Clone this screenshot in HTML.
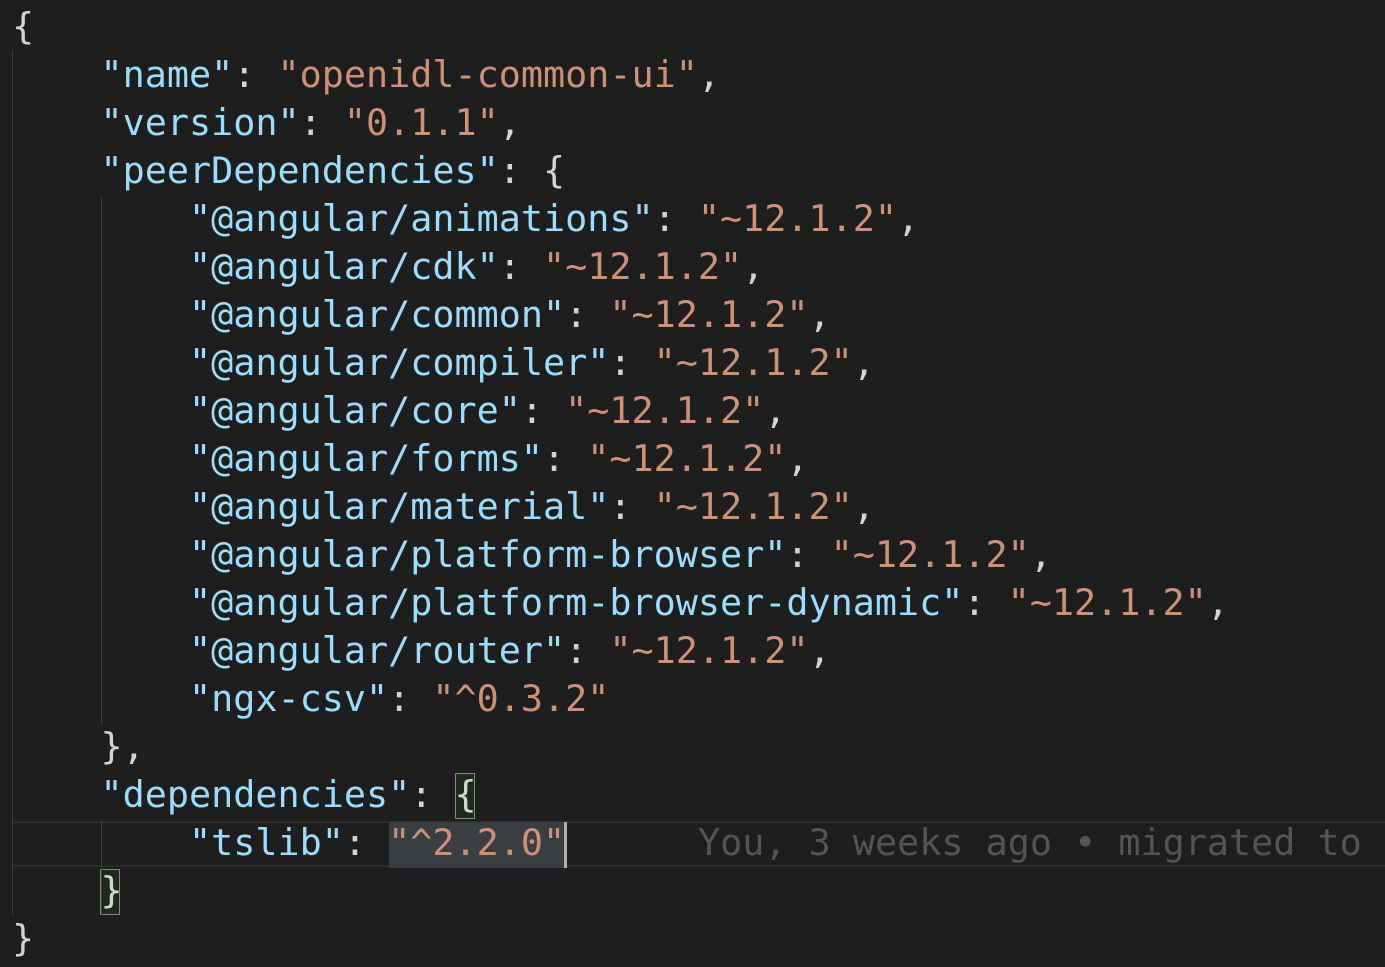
<!DOCTYPE html>
<html><head><meta charset="utf-8"><style>
html,body{margin:0;padding:0;background:#1e1e1e;width:1385px;height:967px;overflow:hidden;position:relative}
.l{position:absolute;left:12px;height:48px;line-height:48px;white-space:pre;font-family:"DejaVu Sans Mono","Liberation Mono",monospace;font-size:36.75px;color:#d4d4d4;letter-spacing:0}
.k{color:#9cdcfe}.s{color:#ce9178}.b{color:#555555}
.g{position:absolute;width:1px;background:#404040}
</style></head><body>
<div style="position:absolute;left:12px;top:821px;width:1373px;height:46px;border-top:2px solid #2c2c2c;border-bottom:2px solid #2c2c2c;box-sizing:border-box"></div>
<div style="position:absolute;left:389px;top:822px;width:176px;height:46px;background:#3a3d41"></div>
<div style="position:absolute;left:564px;top:822px;width:3px;height:46px;background:#aeafad"></div>
<div style="position:absolute;left:455px;top:773px;width:20px;height:46px;border:1px solid #888;background:#1d2a1d;box-sizing:border-box"></div>
<div style="position:absolute;left:100px;top:869px;width:20px;height:46px;border:1px solid #888;background:#1d2a1d;box-sizing:border-box"></div>
<div class="g" style="left:12px;top:51px;height:864px"></div>
<div class="g" style="left:101px;top:197px;height:527px"></div>
<div class="g" style="left:101px;top:821px;height:94px"></div>
<div class="l" style="top:3px">{</div>
<div class="l" style="top:51px">    <span class="k">"name"</span>: <span class="s">"openidl-common-ui"</span>,</div>
<div class="l" style="top:99px">    <span class="k">"version"</span>: <span class="s">"0.1.1"</span>,</div>
<div class="l" style="top:147px">    <span class="k">"peerDependencies"</span>: {</div>
<div class="l" style="top:195px">        <span class="k">"@angular/animations"</span>: <span class="s">"~12.1.2"</span>,</div>
<div class="l" style="top:243px">        <span class="k">"@angular/cdk"</span>: <span class="s">"~12.1.2"</span>,</div>
<div class="l" style="top:291px">        <span class="k">"@angular/common"</span>: <span class="s">"~12.1.2"</span>,</div>
<div class="l" style="top:339px">        <span class="k">"@angular/compiler"</span>: <span class="s">"~12.1.2"</span>,</div>
<div class="l" style="top:387px">        <span class="k">"@angular/core"</span>: <span class="s">"~12.1.2"</span>,</div>
<div class="l" style="top:435px">        <span class="k">"@angular/forms"</span>: <span class="s">"~12.1.2"</span>,</div>
<div class="l" style="top:483px">        <span class="k">"@angular/material"</span>: <span class="s">"~12.1.2"</span>,</div>
<div class="l" style="top:531px">        <span class="k">"@angular/platform-browser"</span>: <span class="s">"~12.1.2"</span>,</div>
<div class="l" style="top:579px">        <span class="k">"@angular/platform-browser-dynamic"</span>: <span class="s">"~12.1.2"</span>,</div>
<div class="l" style="top:627px">        <span class="k">"@angular/router"</span>: <span class="s">"~12.1.2"</span>,</div>
<div class="l" style="top:675px">        <span class="k">"ngx-csv"</span>: <span class="s">"^0.3.2"</span></div>
<div class="l" style="top:723px">    },</div>
<div class="l" style="top:771px">    <span class="k">"dependencies"</span>: {</div>
<div class="l" style="top:819px;width:1373px;overflow:hidden">        <span class="k">"tslib"</span>: <span class="s">"^2.2.0"</span>      <span class="b">You, 3 weeks ago • migrated to a</span></div>
<div class="l" style="top:867px">    }</div>
<div class="l" style="top:915px">}</div>
</body></html>
